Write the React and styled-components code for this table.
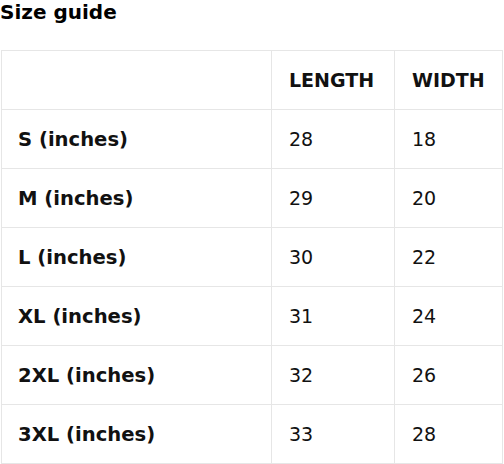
import React from "react";
import styled, { createGlobalStyle } from "styled-components";

const GlobalStyle = createGlobalStyle`
  html, body {
    margin: 0;
    padding: 0;
    background: #fff;
    font-family: "DejaVu Sans", Verdana, sans-serif;
    color: #111;
  }
`;

const sizes = [
  { label: "S (inches)", length: 28, width: 18 },
  { label: "M (inches)", length: 29, width: 20 },
  { label: "L (inches)", length: 30, width: 22 },
  { label: "XL (inches)", length: 31, width: 24 },
  { label: "2XL (inches)", length: 32, width: 26 },
  { label: "3XL (inches)", length: 33, width: 28 },
];

function App() {
  return (
    <Wrapper>
      <GlobalStyle />
      <Title>Size guide</Title>
      <Table>
        <colgroup>
          <col style={{ width: 270 }} />
          <col style={{ width: 123 }} />
          <col />
        </colgroup>
        <thead>
          <tr>
            <Cell as="th"></Cell>
            <Cell as="th">LENGTH</Cell>
            <Cell as="th">WIDTH</Cell>
          </tr>
        </thead>
        <tbody>
          {sizes.map((s) => (
            <tr key={s.label}>
              <Cell as="th" $label>
                {s.label}
              </Cell>
              <Cell>{s.length}</Cell>
              <Cell>{s.width}</Cell>
            </tr>
          ))}
        </tbody>
      </Table>
    </Wrapper>
  );
}

const Wrapper = styled.div`
  width: 504px;
`;

const Title = styled.h2`
  margin: 0 0 26px 0;
  font-size: 20px;
  font-weight: bold;
  line-height: 24px;
  color: #000;
`;

const Table = styled.table`
  margin-left: 1px;
  width: 502px;
  border-collapse: collapse;
  table-layout: fixed;
`;

const Cell = styled.td`
  border: 1px solid #e6e6e6;
  height: 59px;
  padding: 0 17px;
  padding-left: ${(p) => (p.$label ? "16px" : "17px")};
  box-sizing: border-box;
  text-align: left;
  vertical-align: middle;
  font-size: ${(p) => (p.$label ? "19.6px" : "19px")};
  font-weight: ${(p) => (p.as === "th" ? "bold" : "normal")};
  color: #111;
  white-space: nowrap;
`;

export default App;
